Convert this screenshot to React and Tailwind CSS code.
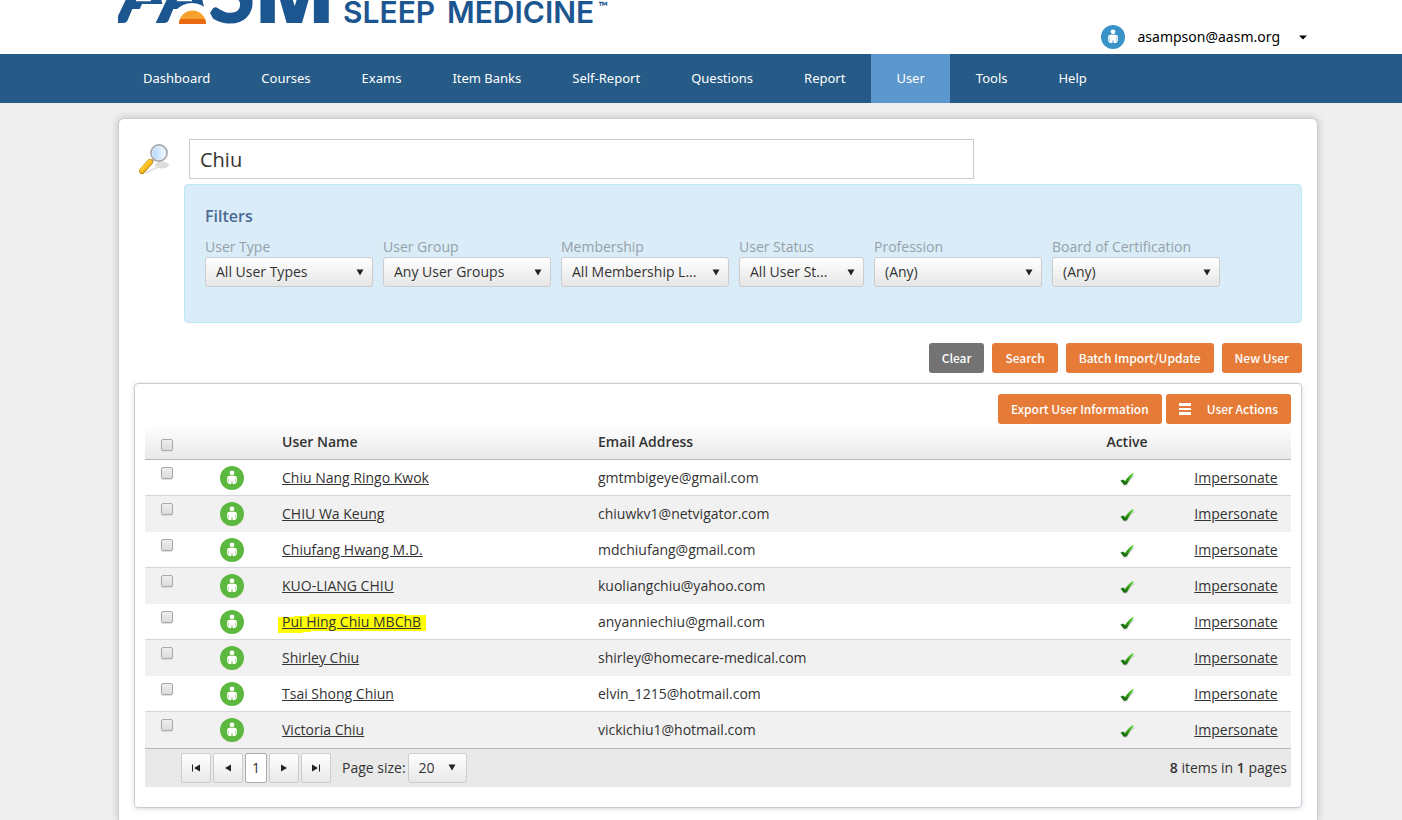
import { useState } from "react";

const NAV = [
  "Dashboard",
  "Courses",
  "Exams",
  "Item Banks",
  "Self-Report",
  "Questions",
  "Report",
  "User",
  "Tools",
  "Help",
];

const FILTERS = [
  { id: "type", label: "User Type", value: "All User Types", width: "w-[168px]" },
  { id: "group", label: "User Group", value: "Any User Groups", width: "w-[168px]" },
  { id: "membership", label: "Membership", value: "All Membership L...", width: "w-[168px]" },
  { id: "status", label: "User Status", value: "All User St...", width: "w-[125px]" },
  { id: "profession", label: "Profession", value: "(Any)", width: "w-[168px]" },
  { id: "board", label: "Board of Certification", value: "(Any)", width: "w-[168px]" },
];

const USERS = [
  { name: "Chiu Nang Ringo Kwok", email: "gmtmbigeye@gmail.com" },
  { name: "CHIU Wa Keung", email: "chiuwkv1@netvigator.com" },
  { name: "Chiufang Hwang M.D.", email: "mdchiufang@gmail.com" },
  { name: "KUO-LIANG CHIU", email: "kuoliangchiu@yahoo.com" },
  { name: "Pui Hing Chiu MBChB", email: "anyanniechiu@gmail.com", marked: true },
  { name: "Shirley Chiu", email: "shirley@homecare-medical.com" },
  { name: "Tsai Shong Chiun", email: "elvin_1215@hotmail.com" },
  { name: "Victoria Chiu", email: "vickichiu1@hotmail.com" },
];

function Logo() {
  return (
    <svg
      width="492"
      height="26"
      viewBox="0 0 492 26"
      className="block"
      role="img"
      aria-label="AASM Sleep Medicine"
    >
      <g fill="#1c5690" fontFamily="Lato, sans-serif" fontWeight="900">
        <text x="0" y="23" fontSize="78" fontStyle="italic">A</text>
        <path d="M24 4H60V26H14z" fill="#fff" />
        <text x="41" y="23" fontSize="78" fontStyle="italic">A</text>
        <text x="89" y="23" fontSize="88">S</text>
        <text x="136" y="23" fontSize="84" fontFamily="Open Sans, sans-serif" fontWeight="800">
          M
        </text>
        <g fontSize="30" fontFamily="Inter, sans-serif" fontWeight="600">
          <text x="225" y="23">SLEEP</text>
          <text x="329" y="23">MEDICINE</text>
        </g>
        <text x="480" y="11" fontSize="13" fontWeight="700">™</text>
      </g>
      <path d="M52 26 A22 23 0 0 1 96 26 Z" fill="#fff" />
      <path d="M61 24 A13 13 0 0 1 88 24 Z" fill="#f6a02d" />
      <path d="M61 24 Q61 21 62 19 H87 Q88 21 88 24 Z" fill="#e96a10" />
    </svg>
  );
}

function PersonIcon({ color }) {
  return (
    <svg width="24" height="24" viewBox="0 0 24 24" className="block" aria-hidden="true">
      <circle cx="12" cy="12" r="12" fill={color} />
      <circle cx="12" cy="6.8" r="2.4" fill="#fff" />
      <path
        d="M9.5 9.8h5a2.4 2.4 0 0 1 2.4 2.4v4.4h-1.2V18h-3.2v-2.500h-1V18H8.300v-1.400H7.100v-4.400a2.400 2.400 0 0 1 2.400-2.400z"
        fill="#fff"
      />
      <path d="M8.500 12.500v4M15.500 12.500v4" stroke={color} strokeWidth="0.4" />
    </svg>
  );
}

function MagnifierIcon() {
  return (
    <svg width="32" height="32" viewBox="0 0 32 32" className="block shrink-0" aria-hidden="true">
      <defs>
        <linearGradient id="lens" x1="0" y1="0.6" x2="1" y2="0.4">
          <stop offset="0" stopColor="#a9d4fc" />
          <stop offset="0.5" stopColor="#d3e9fe" />
          <stop offset="1" stopColor="#f9fcff" />
        </linearGradient>
        <linearGradient id="handle" x1="0" y1="0" x2="1" y2="1">
          <stop offset="0" stopColor="#ffe04a" />
          <stop offset="0.6" stopColor="#fbbc1c" />
          <stop offset="1" stopColor="#d98a0a" />
        </linearGradient>
      </defs>
      <ellipse cx="24" cy="22" rx="7" ry="3.5" fill="#cfcfcf" opacity="0.7" />
      <path d="M6 30 L18 24 L20 25 L9 30 Z" fill="#dcdcdc" />
      <path d="M13 19 L17 15" stroke="#b5b5b5" strokeWidth="3" />
      <path d="M4 28 L12 19" stroke="#b87a1a" strokeWidth="6" strokeLinecap="round" />
      <path d="M4 27.5 L12 19" stroke="url(#handle)" strokeWidth="5" strokeLinecap="round" />
      <circle cx="21" cy="10" r="8" fill="url(#lens)" stroke="#a4a7ac" strokeWidth="1.8" />
      <circle cx="21" cy="10" r="6.8" fill="none" stroke="#e9ecf0" strokeWidth="1" />
    </svg>
  );
}

function CheckMark() {
  return (
    <svg width="16" height="16" viewBox="0 0 16 16" className="mx-auto block" aria-hidden="true">
      <defs>
        <linearGradient id="tick" x1="1" y1="0" x2="0.3" y2="1">
          <stop offset="0" stopColor="#6be03a" />
          <stop offset="0.5" stopColor="#36a51c" />
          <stop offset="1" stopColor="#0f5f06" />
        </linearGradient>
      </defs>
      <path d="M3 12 L6 11 L7 13 C9 10 12 7 15.5 5 L15.5 6 C12.5 8 10 11 8 15.5 L5.5 15.5 Z" fill="#c4c4c4" />
      <path d="M1.5 10.5 L4.5 9.5 L6 11.2 C8 8 10.5 5.200 13.5 3.300 L15 3.500 C12.500 7 10 10 8 14 L5 15 Z" fill="url(#tick)" />
    </svg>
  );
}

function Caret({ className }) {
  return (
    <svg width="8" height="7" viewBox="0 0 8 7" className={className} aria-hidden="true">
      <path d="M0.5 0.5h7L4 6.5z" fill="#222" />
    </svg>
  );
}

function FilterSelect({ id, label, value, width }) {
  return (
    <div className={width}>
      <label
        htmlFor={id}
        className="block whitespace-nowrap text-sm leading-5 text-[#95a1a9]"
      >
        {label}
      </label>
      <div className="relative">
        <select
          id={id}
          className="block h-[30px] w-full appearance-none rounded-[3px] border border-[#ccc] bg-linear-to-b from-white to-[#e6e6e6] pl-[10px] pr-6 text-sm text-[#333]"
        >
          <option>{value}</option>
        </select>
        <Caret className="pointer-events-none absolute right-[9px] top-3" />
      </div>
    </div>
  );
}

function Button({ color = "bg-[#e57b37]", children }) {
  return (
    <button
      type="button"
      className={`flex h-[30px] items-center whitespace-nowrap rounded-[3px] px-[13px] font-['Noto_Sans_CJK_SC',sans-serif] text-xs font-medium text-white ${color}`}
    >
      {children}
    </button>
  );
}

function Checkbox({ label, checked, onChange }) {
  return (
    <input
      type="checkbox"
      aria-label={label}
      checked={checked}
      onChange={onChange}
      className="mx-auto block size-3 appearance-none rounded-[2px] border border-[#a9a9a9] bg-linear-to-b from-[#eee] to-[#dcdcdc] shadow-[0_1px_1px_#ddd] checked:from-[#5b96cc] checked:to-[#265a87]"
    />
  );
}

function UserLink({ name, marked }) {
  if (!marked) {
    return (
      <a href="#" className="underline">
        {name}
      </a>
    );
  }

  // highlighter stroke behind the name
  return (
    <a href="#" className="relative isolate underline">
      <svg
        width="148"
        height="20"
        viewBox="0 0 148 20"
        className="absolute -left-1 top-[2px] -z-10"
        aria-hidden="true"
      >
        <path
          d="M0 3H16V2H31V0H127V1H148V17H33V18H25V19H0z"
          fill="#ff0"
        />
      </svg>
      {name}
    </a>
  );
}

function PagerButton({ label, d }) {
  return (
    <button
      type="button"
      aria-label={label}
      className="flex size-[30px] items-center justify-center rounded-[2px] border border-[#ccc] bg-linear-to-b from-white to-[#e8e8e8]"
    >
      <svg width="10" height="8" viewBox="0 0 10 8" aria-hidden="true">
        <path d={d} fill="#222" />
      </svg>
    </button>
  );
}

export default function App() {
  const [query, setQuery] = useState("Chiu");
  const [selected, setSelected] = useState([]);

  const toggle = (email) => {
    setSelected((prev) =>
      prev.includes(email) ? prev.filter((e) => e !== email) : [...prev, email],
    );
  };

  const toggleAll = () => {
    setSelected((prev) =>
      prev.length === USERS.length ? [] : USERS.map((u) => u.email),
    );
  };

  return (
    <div className="flex min-h-screen flex-col bg-[#efefef] font-['Open_Sans',sans-serif] text-sm text-[#333]">
      <header className="flex h-[54px] items-start justify-between bg-white pl-[118px] pr-[94px]">
        <Logo />
        <button
          type="button"
          className="mt-[25px] flex items-center font-['Noto_Sans',sans-serif] text-black"
        >
          <PersonIcon color="#3a93c8" />
          <span className="ml-3 mr-[18px]">asampson@aasm.org</span>
          <svg width="10" height="5" viewBox="0 0 10 5" aria-hidden="true">
            <path d="M1 0.5h8L5 4.5z" fill="#000" />
          </svg>
        </button>
      </header>

      <nav className="flex h-[49px] gap-px bg-[#265a87] pl-[118px] font-['Noto_Sans',sans-serif] text-[13px] text-white">
        {NAV.map((item) => (
          <a
            key={item}
            href="#"
            className={`flex items-center whitespace-nowrap px-[25px] ${
              item === "User" ? "bg-[#5c97cd]" : ""
            }`}
          >
            {item}
          </a>
        ))}
      </nav>

      <main className="flex grow flex-col pl-[118px] pr-[84px] pt-[15px]">
        <div className="grow rounded-t-md border border-b-0 border-[#c5cdd6] bg-white px-[15px] pt-5 shadow-[0_0_8px_rgba(0,0,0,0.2)]">
          {/* Search */}
          <div className="flex items-center pl-1">
            <MagnifierIcon />
            <input
              type="text"
              aria-label="Search users"
              value={query}
              onChange={(e) => setQuery(e.target.value)}
              className="ml-[19px] h-10 w-[785px] border border-[#ccc] px-[10px] text-xl"
            />
          </div>

          {/* Filters */}
          <section className="ml-[50px] mt-[5px] rounded border border-[#bce8f1] bg-[#daecf8] px-5 pb-[35px] pt-[19px]">
            <h2 className="text-base font-semibold leading-6 text-[#4a6a92]">
              Filters
            </h2>
            <div className="mt-[9px] flex gap-[10px]">
              {FILTERS.map((f) => (
                <FilterSelect key={f.id} {...f} />
              ))}
            </div>
          </section>

          <div className="mt-5 flex justify-end gap-2">
            <Button color="bg-[#737373]">Clear</Button>
            <Button>Search</Button>
            <Button>Batch Import/Update</Button>
            <Button>New User</Button>
          </div>

          {/* Results */}
          <section className="mt-[10px] rounded border border-[#c5cdd6] px-[10px] pb-5 pt-[10px] shadow-[0_1px_4px_rgba(0,0,0,0.15)]">
            <div className="flex justify-end gap-1">
              <Button>Export User Information</Button>
              <Button>
                <svg width="12" height="12" viewBox="0 0 12 12" className="mr-4" aria-hidden="true">
                  <path d="M0 0h12v3H0zM0 5h12v2H0zM0 9h12v3H0z" fill="#fff" />
                </svg>
                User Actions
              </Button>
            </div>

            <table className="w-full table-fixed border-separate border-spacing-0">
              <colgroup>
                <col className="w-11" />
                <col className="w-[86px]" />
                <col className="w-[316px]" />
                <col />
                <col className="w-[108px]" />
                <col className="w-[110px]" />
              </colgroup>
              <thead className="bg-linear-to-b from-white to-[#e8e8e8] text-left">
                <tr className="h-9 *:border-b *:border-[#b5b8b8] *:font-semibold">
                  <th className="pt-[6px]">
                    <Checkbox
                      label="Select all users"
                      checked={selected.length === USERS.length}
                      onChange={toggleAll}
                    />
                  </th>
                  <th />
                  <th className="pl-[7px]">User Name</th>
                  <th className="pl-[7px]">Email Address</th>
                  <th className="text-center">Active</th>
                  <th />
                </tr>
              </thead>
              <tbody>
                {USERS.map((u) => (
                  <tr
                    key={u.email}
                    className="h-9 *:border-b odd:*:border-[#d5d5d5] even:bg-[#f1f1f1] even:*:border-transparent"
                  >
                    <td className="pt-[7px] align-top">
                      <Checkbox
                        label={`Select ${u.name}`}
                        checked={selected.includes(u.email)}
                        onChange={() => toggle(u.email)}
                      />
                    </td>
                    <td className="pl-[31px]">
                      <PersonIcon color="#5cb83f" />
                    </td>
                    <td className="pl-[7px]">
                      <UserLink name={u.name} marked={u.marked} />
                    </td>
                    <td className="pl-[7px]">{u.email}</td>
                    <td>
                      <CheckMark />
                    </td>
                    <td className="text-center">
                      <a href="#" className="underline">
                        Impersonate
                      </a>
                    </td>
                  </tr>
                ))}
              </tbody>
            </table>

            <div className="flex h-[39px] items-center border-t border-[#b5b8b8] bg-[#e9e9e9] pl-9 pr-1">
              <div className="flex gap-[2px]">
                <PagerButton label="First page" d="M1 0.5h1v7H1zM9 0.5v7L3 4z" />
                <PagerButton label="Previous page" d="M8 0.5v7L2 4z" />
                <button
                  type="button"
                  className="h-[30px] w-[22px] rounded-[2px] border border-[#aaa] bg-white"
                >
                  1
                </button>
                <PagerButton label="Next page" d="M2 0.5v7L8 4z" />
                <PagerButton label="Last page" d="M8 0.5h1v7H8zM1 0.5v7L7 4z" />
              </div>
              <label htmlFor="page-size" className="ml-[11px] mr-[2px]">
                Page size:
              </label>
              <div className="relative">
                <select
                  id="page-size"
                  className="block h-[30px] w-[59px] appearance-none rounded-[3px] border border-[#ccc] bg-linear-to-b from-white to-[#e8e8e8] pl-[10px] text-sm"
                >
                  <option>20</option>
                </select>
                <Caret className="pointer-events-none absolute right-[11px] top-[11px]" />
              </div>
              <span className="ml-auto">
                <b className="font-semibold">8</b> items in{" "}
                <b className="font-semibold">1</b> pages
              </span>
            </div>
          </section>
        </div>
      </main>
    </div>
  );
}
